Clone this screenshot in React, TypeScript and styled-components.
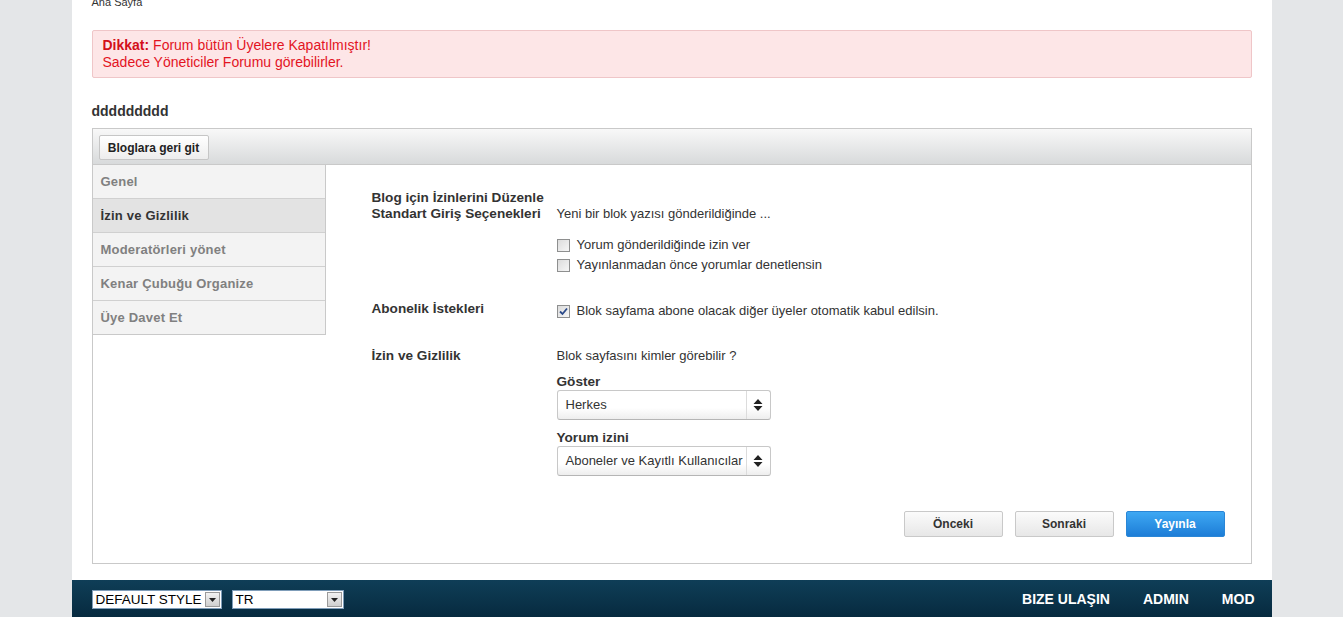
import React from "react";
import styled, { createGlobalStyle } from "styled-components";

const Global = createGlobalStyle`
  html, body { margin: 0; padding: 0; }
  body {
    background: #e4e6e8;
    font-family: "Liberation Sans", Arial, sans-serif;
    color: #333;
    overflow: hidden;
  }
`;

const Page = styled.div`
  width: 1200px;
  margin: 0 auto;
`;

const Main = styled.div`
  background: #fff;
  padding: 0 20px 16px;
`;

const Breadcrumb = styled.div`
  font-size: 11px;
  line-height: 12px;
  height: 8px;
  margin-top: -4px;
  color: #333;
`;

const Alert = styled.div`
  margin-top: 26px;
  background: #fde6e7;
  border: 1px solid #efc6c8;
  border-radius: 2px;
  padding: 6px 10px;
  color: #e3141f;
  font-size: 14px;
  line-height: 17px;
  b { color: #d3101a; }
`;

const Title = styled.h2`
  margin: 25px 0 0;
  font-size: 14px;
  line-height: 16px;
  font-weight: bold;
  color: #333;
`;

const Panel = styled.div`
  margin-top: 9px;
  border: 1px solid #c9c9c9;
`;

const PanelHeader = styled.div`
  height: 36px;
  box-sizing: border-box;
  padding: 6px 6px 0;
  background: linear-gradient(#f8f8f8, #d8dadb);
  border-bottom: 1px solid #c9c9c9;
`;

const HeaderButton = styled.button`
  height: 25px;
  width: 110px;
  padding: 0;
  font-family: "Liberation Sans", Arial, sans-serif;
  font-weight: bold;
  font-size: 12px;
  color: #222;
  background: linear-gradient(#ffffff, #ededed);
  border: 1px solid #c6c6c6;
  border-radius: 2px;
`;

const PanelBody = styled.div`
  display: flex;
  align-items: flex-start;
`;

const Sidebar = styled.div`
  width: 232px;
  flex: none;
  border-right: 1px solid #c9c9c9;
  border-bottom: 1px solid #c9c9c9;
`;

const SideItem = styled.div<{ $active?: boolean }>`
  height: 33px;
  line-height: 33px;
  padding-left: 8px;
  font-size: 13px;
  letter-spacing: 0.2px;
  font-weight: bold;
  background: ${(p) => (p.$active ? "#e3e3e3" : "#f3f3f3")};
  color: ${(p) => (p.$active ? "#333" : "#808080")};
  border-bottom: 1px solid #d0d0d0;
  &:last-child { border-bottom: none; }
`;

const Content = styled.div`
  flex: 1;
  padding: 25px 26px 26px 46px;
`;

const FormGrid = styled.div`
  display: grid;
  grid-template-columns: 185px 1fr;
`;

const Label = styled.div<{ $gap?: number }>`
  font-size: 13.6px;
  font-weight: bold;
  line-height: 16px;
  color: #333;
  margin-top: ${(p) => p.$gap ?? 0}px;
`;

const Value = styled.div<{ $gap?: number }>`
  font-size: 13px;
  line-height: 16px;
  color: #333;
  margin-top: ${(p) => p.$gap ?? 0}px;
`;

const CheckList = styled.div`
  margin-top: 13px;
`;

const CheckRow = styled.label`
  display: flex;
  align-items: center;
  gap: 7px;
  height: 20px;
  font-size: 13px;
  color: #333;
`;

const Box = styled.span`
  width: 11px;
  height: 11px;
  border: 1px solid #8e8f8f;
  background: linear-gradient(135deg, #dcdcdc, #f6f6f6);
  box-sizing: content-box;
  display: inline-flex;
  align-items: center;
  justify-content: center;
`;

const FieldLabel = styled.div`
  font-size: 13.6px;
  font-weight: bold;
  line-height: 16px;
  color: #333;
  margin-top: 10px;
`;

const SelectBox = styled.div`
  width: 214px;
  height: 30px;
  box-sizing: border-box;
  display: flex;
  align-items: stretch;
  border: 1px solid #c8c8c8;
  border-bottom-color: #b5b5b5;
  border-radius: 3px;
  background: linear-gradient(#ffffff 60%, #eeeeee);
  font-size: 13px;
  color: #333;
`;

const SelectText = styled.div`
  flex: 1;
  padding-left: 8px;
  line-height: 28px;
  white-space: nowrap;
  overflow: hidden;
`;

const SelectArrow = styled.div`
  width: 23px;
  border-left: 1px solid #dcdcdc;
  display: flex;
  align-items: center;
  justify-content: center;
`;

const Actions = styled.div`
  display: flex;
  justify-content: flex-end;
  gap: 12px;
  margin-top: 35px;
`;

const ActionButton = styled.button<{ $primary?: boolean }>`
  width: 99px;
  height: 26px;
  padding: 0;
  font-family: "Liberation Sans", Arial, sans-serif;
  font-size: 12px;
  font-weight: bold;
  border-radius: 2px;
  color: ${(p) => (p.$primary ? "#fff" : "#333")};
  border: 1px solid ${(p) => (p.$primary ? "#2a86d6" : "#c9c9c9")};
  background: ${(p) =>
    p.$primary ? "linear-gradient(#3ea8f3, #1d7dd7)" : "linear-gradient(#fbfbfb, #e7e7e7)"};
`;

const Footer = styled.div`
  height: 45px;
  box-sizing: border-box;
  background: linear-gradient(#0f3e57, #05263a);
  display: flex;
  align-items: flex-start;
  justify-content: space-between;
  padding: 10px 17px 0 20px;
`;

const FooterSelects = styled.div`
  display: flex;
  gap: 10px;
`;

const OldSelect = styled.div<{ $w: number }>`
  width: ${(p) => p.$w}px;
  height: 19px;
  box-sizing: border-box;
  background: #fff;
  border: 1px solid #7f9db9;
  display: flex;
  align-items: center;
  font-size: 13.5px;
  color: #000;
`;

const OldSelectText = styled.div`
  flex: 1;
  padding-left: 3px;
  line-height: 17px;
  white-space: nowrap;
`;

const OldArrow = styled.div`
  width: 15px;
  height: 15px;
  margin-right: 1px;
  box-sizing: border-box;
  border: 1px solid #9a9a9a;
  background: linear-gradient(#f2f2f2, #cfcfcf);
  display: flex;
  align-items: center;
  justify-content: center;
`;

const FooterLinks = styled.nav`
  display: flex;
  gap: 33px;
  padding-top: 1px;
`;

const FooterLink = styled.a`
  color: #fff;
  font-weight: bold;
  font-size: 14px;
  line-height: 17px;
  text-decoration: none;
`;

const UpDown = () => (
  <svg width="10" height="14" viewBox="0 0 10 14">
    <path d="M5 1 L9.5 6 H0.5 Z M5 13 L9.5 8 H0.5 Z" fill="#222" />
  </svg>
);

const Down = () => (
  <svg width="7" height="4" viewBox="0 0 7 4">
    <path d="M0 0 H7 L3.5 4 Z" fill="#222" />
  </svg>
);

const Tick = () => (
  <svg width="9" height="9" viewBox="0 0 9 9">
    <path d="M1 4.5 L3.5 7 L8 1.5" stroke="#2b4a8a" strokeWidth="1.8" fill="none" />
  </svg>
);

export default function App() {
  return (
    <Page>
      <Global />
      <Main>
        <Breadcrumb>Ana Sayfa</Breadcrumb>
        <Alert>
          <b>Dikkat:</b> Forum bütün Üyelere Kapatılmıştır!
          <br />
          Sadece Yöneticiler Forumu görebilirler.
        </Alert>
        <Title>ddddddddd</Title>
        <Panel>
          <PanelHeader>
            <HeaderButton>Bloglara geri git</HeaderButton>
          </PanelHeader>
          <PanelBody>
            <Sidebar>
              <SideItem>Genel</SideItem>
              <SideItem $active>İzin ve Gizlilik</SideItem>
              <SideItem>Moderatörleri yönet</SideItem>
              <SideItem>Kenar Çubuğu Organize</SideItem>
              <SideItem>Üye Davet Et</SideItem>
            </Sidebar>
            <Content>
              <FormGrid>
                <Label>Blog için İzinlerini Düzenle</Label>
                <Value />
                <Label>Standart Giriş Seçenekleri</Label>
                <Value>
                  Yeni bir blok yazısı gönderildiğinde ...
                  <CheckList>
                    <CheckRow>
                      <Box />
                      Yorum gönderildiğinde izin ver
                    </CheckRow>
                    <CheckRow>
                      <Box />
                      Yayınlanmadan önce yorumlar denetlensin
                    </CheckRow>
                  </CheckList>
                </Value>
                <Label $gap={26}>Abonelik İstekleri</Label>
                <Value $gap={26}>
                  <CheckRow>
                    <Box>
                      <Tick />
                    </Box>
                    Blok sayfama abone olacak diğer üyeler otomatik kabul edilsin.
                  </CheckRow>
                </Value>
                <Label $gap={27}>İzin ve Gizlilik</Label>
                <Value $gap={27}>
                  Blok sayfasını kimler görebilir ?
                  <FieldLabel>Göster</FieldLabel>
                  <SelectBox>
                    <SelectText>Herkes</SelectText>
                    <SelectArrow>
                      <UpDown />
                    </SelectArrow>
                  </SelectBox>
                  <FieldLabel>Yorum izini</FieldLabel>
                  <SelectBox>
                    <SelectText>Aboneler ve Kayıtlı Kullanıcılar</SelectText>
                    <SelectArrow>
                      <UpDown />
                    </SelectArrow>
                  </SelectBox>
                </Value>
              </FormGrid>
              <Actions>
                <ActionButton>Önceki</ActionButton>
                <ActionButton>Sonraki</ActionButton>
                <ActionButton $primary>Yayınla</ActionButton>
              </Actions>
            </Content>
          </PanelBody>
        </Panel>
      </Main>
      <Footer>
        <FooterSelects>
          <OldSelect $w={130}>
            <OldSelectText>DEFAULT STYLE</OldSelectText>
            <OldArrow>
              <Down />
            </OldArrow>
          </OldSelect>
          <OldSelect $w={112}>
            <OldSelectText>TR</OldSelectText>
            <OldArrow>
              <Down />
            </OldArrow>
          </OldSelect>
        </FooterSelects>
        <FooterLinks>
          <FooterLink href="#">BIZE ULAŞIN</FooterLink>
          <FooterLink href="#">ADMIN</FooterLink>
          <FooterLink href="#">MOD</FooterLink>
        </FooterLinks>
      </Footer>
    </Page>
  );
}
